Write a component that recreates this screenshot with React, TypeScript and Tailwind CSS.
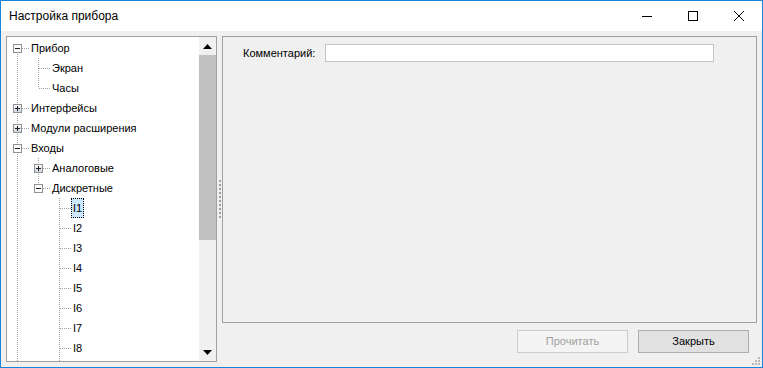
import React from "react";

type Row = { t: string; l: number; e?: "+" | "-"; sel?: boolean };

const rows: Row[] = [
  { t: "Прибор", l: 0, e: "-" },
  { t: "Экран", l: 1 },
  { t: "Часы", l: 1 },
  { t: "Интерфейсы", l: 0, e: "+" },
  { t: "Модули расширения", l: 0, e: "+" },
  { t: "Входы", l: 0, e: "-" },
  { t: "Аналоговые", l: 1, e: "+" },
  { t: "Дискретные", l: 1, e: "-" },
  { t: "I1", l: 2, sel: true },
  { t: "I2", l: 2 },
  { t: "I3", l: 2 },
  { t: "I4", l: 2 },
  { t: "I5", l: 2 },
  { t: "I6", l: 2 },
  { t: "I7", l: 2 },
  { t: "I8", l: 2 },
];

const indent = ["pl-[22px]", "pl-[43px]", "pl-[64px]"];

const lineX = (l: number) => 10 + 21 * l;
const cy = (i: number) => 11 + 20 * i;

// линии дерева
const TreeLines = () => {
  const dot = { stroke: "#a0a0a0", strokeDasharray: "1 1" };
  const vert = [
    { x: lineX(0), y1: cy(0), y2: 340 },
    { x: lineX(1), y1: 21, y2: cy(2) },
    { x: lineX(1), y1: 121, y2: cy(7) },
    { x: lineX(2), y1: 161, y2: 340 },
  ];
  return (
    <svg
      className="absolute left-0 top-0"
      width="191"
      height="340"
      shapeRendering="crispEdges"
    >
      {vert.map((v, i) => (
        <line key={"v" + i} x1={v.x + 0.5} x2={v.x + 0.5} y1={v.y1} y2={v.y2} {...dot} />
      ))}
      {rows.map((r, i) => (
        <line
          key={"h" + i}
          x1={lineX(r.l) + 1}
          x2={lineX(r.l) + 13}
          y1={cy(i) + 0.5}
          y2={cy(i) + 0.5}
          {...dot}
        />
      ))}
      <defs>
        <linearGradient id="plusg" x1="0" y1="0" x2="0" y2="1">
          <stop offset="0" stopColor="#ffffff" />
          <stop offset="1" stopColor="#c9d3e2" />
        </linearGradient>
      </defs>
      {rows.map((r, i) =>
        r.e ? (
          <g key={"b" + i}>
            <rect
              x={lineX(r.l) - 4 + 0.5}
              y={cy(i) - 4 + 0.5}
              width="8"
              height="8"
              fill={r.e === "+" ? "url(#plusg)" : "#fbfbfb"}
              stroke="#919191"
            />
            <line
              x1={lineX(r.l) - 2}
              x2={lineX(r.l) + 3}
              y1={cy(i) + 0.5}
              y2={cy(i) + 0.5}
              stroke="#1e1e1e"
            />
            {r.e === "+" && (
              <line
                x1={lineX(r.l) + 0.5}
                x2={lineX(r.l) + 0.5}
                y1={cy(i) - 2}
                y2={cy(i) + 3}
                stroke="#1e1e1e"
              />
            )}
          </g>
        ) : null
      )}
    </svg>
  );
};

const ScrollBar = () => (
  <div className="w-[17px] h-full bg-[#f0f0f0] flex flex-col">
    <div className="h-[18px] flex items-center justify-center">
      <svg width="9" height="5">
        <path d="M0 5 L4.5 0 L9 5 Z" fill="#000" />
      </svg>
    </div>
    <div className="h-[185px] bg-[#c1c1c1]" />
    <div className="flex-1" />
    <div className="h-[18px] flex items-center justify-center">
      <svg width="9" height="5">
        <path d="M0 0 L4.5 5 L9 0 Z" fill="#000" />
      </svg>
    </div>
  </div>
);

const Tree = () => (
  <div className="w-[211px] h-[326px] border border-[#a0a0a0] bg-white flex">
    <div className="relative flex-1 overflow-hidden pt-[1px]">
      <TreeLines />
      <div className="relative">
        {rows.map((r) => (
          <div key={r.t} className={"h-[20px] flex items-center " + indent[r.l]}>
            <span
              className={
                "h-full flex items-center px-[2px] " +
                (r.sel ? "bg-[#cce8ff] outline outline-1 outline-dotted outline-offset-[-1px] outline-black" : "")
              }
            >
              {r.t}
            </span>
          </div>
        ))}
      </div>
    </div>
    <ScrollBar />
  </div>
);

const Splitter = () => (
  <div className="w-[5px] h-[326px] flex flex-col items-center justify-center gap-[2px]">
    {[...Array(10)].map((_, i) => (
      <div key={i} className="w-[2px] h-[2px] bg-[#a0a0a0]" />
    ))}
  </div>
);

const App = () => {
  return (
    <div className="w-[763px] h-[368px] border border-[#1883d7] flex flex-col bg-[#f0f0f0] text-black font-['Liberation_Sans',Arial,sans-serif] overflow-hidden">
      <div className="h-[30px] bg-white flex items-center justify-between shrink-0">
        <span className="pl-[8px] text-[12px]">Настройка прибора</span>
        <div className="flex h-full">
          <div className="w-[46px] h-full flex items-center justify-center">
            <svg width="10" height="10" shapeRendering="crispEdges">
              <line x1="0" x2="10" y1="5.5" y2="5.5" stroke="#000" />
            </svg>
          </div>
          <div className="w-[46px] h-full flex items-center justify-center">
            <svg width="10" height="10" shapeRendering="crispEdges">
              <rect x="0.5" y="0.5" width="9" height="9" fill="none" stroke="#000" />
            </svg>
          </div>
          <div className="w-[46px] h-full flex items-center justify-center">
            <svg width="10" height="10">
              <path d="M0 0 L10 10 M10 0 L0 10" stroke="#000" strokeWidth="1" />
            </svg>
          </div>
        </div>
      </div>

      <div className="relative flex-1 flex p-[5px] text-[11px]">
        <Tree />
        <Splitter />
        <div className="flex-1 flex flex-col">
          <div className="h-[287px] border border-[#a0a0a0] pt-[7px] pl-[20px]">
            <div className="flex items-center gap-[10px]">
              <span>Комментарий:</span>
              <div className="w-[389px] h-[18px] border border-[#c4c4c4] bg-white" />
            </div>
          </div>
          <div className="mt-[7px] flex justify-end gap-[10px] pr-[8px]">
            <button className="w-[111px] h-[23px] border border-[#cccccc] bg-[#f4f4f4] text-[#a0a0a0] text-[11px]">
              Прочитать
            </button>
            <button className="w-[111px] h-[23px] border border-[#adadad] bg-[#e1e1e1] text-black text-[11px]">
              Закрыть
            </button>
          </div>
        </div>
        <svg className="absolute right-[2px] bottom-[2px]" width="10" height="10" shapeRendering="crispEdges">
          <rect x="8" y="2" width="2" height="2" fill="#b8b8b8" />
          <rect x="5" y="5" width="2" height="2" fill="#b8b8b8" />
          <rect x="8" y="5" width="2" height="2" fill="#b8b8b8" />
          <rect x="2" y="8" width="2" height="2" fill="#b8b8b8" />
          <rect x="5" y="8" width="2" height="2" fill="#b8b8b8" />
          <rect x="8" y="8" width="2" height="2" fill="#b8b8b8" />
        </svg>
      </div>
    </div>
  );
};

export default App;
